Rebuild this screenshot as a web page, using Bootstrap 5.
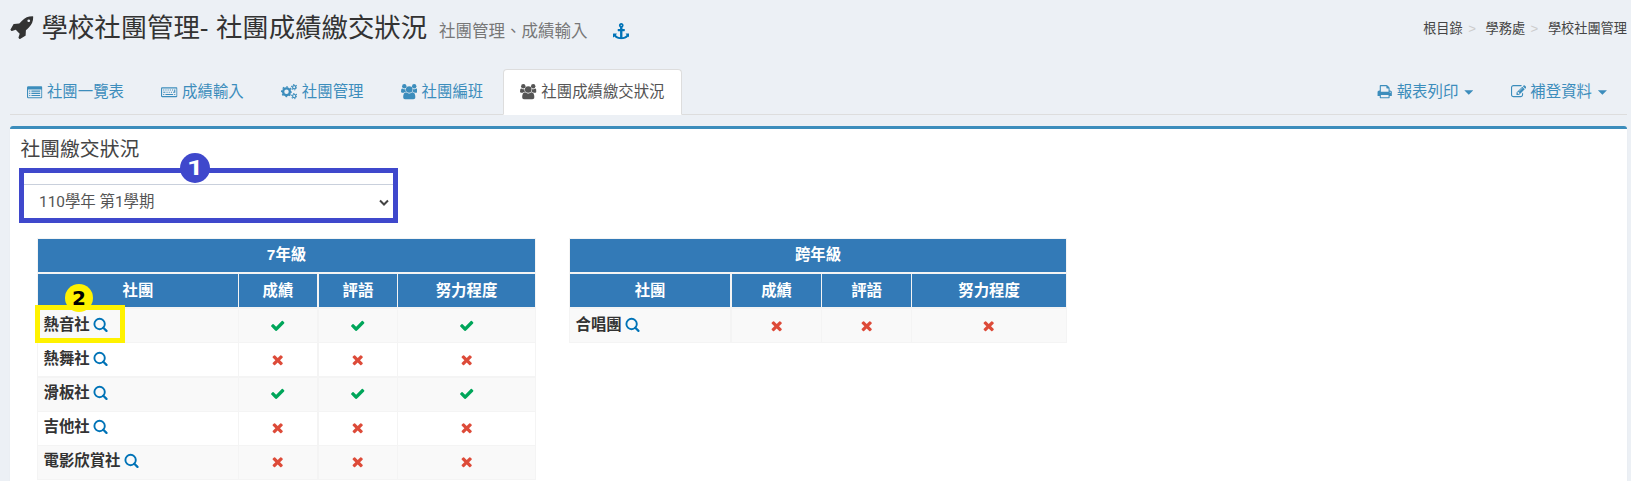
<!DOCTYPE html>
<html lang="zh-Hant">
<head>
<meta charset="utf-8">
<title>學校社團管理</title>
<link rel="stylesheet" href="https://cdn.jsdelivr.net/npm/bootstrap@5.3.0/dist/css/bootstrap.min.css">
<style>
body{background:#ecf0f5;color:#333;font:15.4px/22px "Liberation Sans","Noto Sans CJK TC",sans-serif;overflow:hidden;height:481px}
.ico{height:15.4px;width:15.4px;fill:currentColor;flex:none;display:block}
.ico.wide{width:16.5px}
.page-head{height:69px;padding:0 4px 0 10px}
.page-head h1{font-size:26.4px;line-height:30px;font-weight:400;color:#333;margin:13px 0 0}
.page-head .rocket{width:25px;height:26px;margin-top:1px}
.page-title{margin-left:6.5px}
.sub-title{font-size:16.5px;color:#777;margin-left:12px}
.anchor{color:#0073b7;margin:23px 0 0 25px}
.anchor .ico{width:16.5px;height:16.5px}
.crumbs{font-size:13.2px;color:#444;margin-top:19px;line-height:20px}
.crumbs .breadcrumb-item{padding:0;color:#444}
.crumbs .breadcrumb-item+.breadcrumb-item::before{content:">";color:#ccc;padding:0 9.6px 0 5.5px;float:none}
.nav-tabs{margin:0 4px 0 10px;height:46px;border-bottom:1px solid #ddd}
.nav-tabs .nav-link{color:#3c8dbc;padding:0 16.5px 0 16.2px;height:46px;border:1px solid transparent;border-radius:4px 4px 0 0;margin:0 2.6px 0 0;display:flex;align-items:center;gap:4.4px}
.nav-tabs .nav-link.active{background:#fff;color:#555;border-color:#ddd #ddd #fff}
.caret{width:9px;height:4.6px;background:currentColor;clip-path:polygon(0 0,100% 0,50% 100%);margin:1px 0 0 1.6px}
.panel-box{margin:11px 4px 0 10px;background:#fff;border-top:3px solid #3c8dbc;border-radius:3px 3px 0 0;height:360px;box-shadow:0 1px 1px rgba(0,0,0,.1)}
.panel-box h3{font-size:19.8px;line-height:24px;font-weight:400;color:#444;margin:0;padding:8px 0 0 10.5px}
.term{position:relative;margin:7px 0 0 9px;width:379px;height:55px;border:5px solid #3f48cc}
.term .form-select{margin-top:11px;height:34px;border:0;border-top:1px solid #c9d0dc;border-radius:0;background:#fff;color:#555;font-family:Roboto,"Noto Sans CJK TC",sans-serif;font-size:15.4px;line-height:34px;padding:0 0 0 15px;width:369px}
.term svg{position:absolute;right:4.5px;top:26px}
.bubble{position:absolute;border-radius:50%;display:flex;align-items:center;justify-content:center;font-weight:700}
.b1{width:30px;height:30px;left:156px;top:-20px;background:#3f48cc;color:#fff;font-size:21px;font-family:Roboto,sans-serif}
.b1 span{transform:scaleX(1.35)}
.b2{width:28px;height:28px;left:27px;top:-25px;background:#fff200;color:#000;font-size:20px;font-family:"DejaVu Sans",sans-serif}
.frame{position:absolute;left:-3px;top:-4px;width:90px;height:38px;border:5px solid #fff200}
.tables{padding:15px 0 0 27px;gap:33px}
.grade{table-layout:fixed;border-collapse:separate;border-spacing:0;border:solid #f4f4f4;border-width:1px 0 0 1px;flex:none}
.grade th,.grade td{padding:0;border:solid #f4f4f4;border-width:0 1px 1px 0;height:34px;vertical-align:middle;text-align:center}
.grade thead th{background:#337ab7;color:#fff;font-weight:700;height:35px;border-bottom-width:2px;line-height:20px;padding-bottom:2px}
.grade thead tr+tr th{padding-bottom:0}
.grade .w2{border-right-width:2px}
.grade .h2r>*{height:35px;border-bottom-width:2px}
.grade tbody tr:nth-child(odd)>*{background:#f9f9f9}
.grade tbody th{text-align:left;padding:0 0 1px 5.5px;font-weight:700;color:#333;position:relative}
.grade tbody tr:nth-child(n+3) th{padding-bottom:3px}
.grade tbody tr:nth-child(n+3) td{padding-bottom:2px}
.grade tbody th>div{gap:3.4px}
.grade tbody th .ico{color:#0073b7}
.grade td .ico{margin:0 auto}
.ok{color:#00a65a}.no{color:#dd4b39}
</style>
<script src="https://cdn.jsdelivr.net/npm/bootstrap@5.3.0/dist/js/bootstrap.bundle.min.js"></script>
</head>
<body>
<svg class="d-none">
<symbol id="search" viewBox="0 0 15.4 15.4"><g fill="none" stroke="currentColor"><circle cx="6.600" cy="7" r="5.200" stroke-width="1.900"/><path d="M10.300 10.700 13.500 13.900" stroke-width="2.200" stroke-linecap="round"/></g></symbol>
<symbol id="check" viewBox="0 0 1792 1792"><path d="M1671 566q0 40-28 68l-724 724-136 136q-28 28-68 28t-68-28l-136-136-362-362q-28-28-28-68t28-68l136-136q28-28 68-28t68 28l294 295 656-657q28-28 68-28t68 28l136 136q28 28 28 68z"/></symbol>
<symbol id="times" viewBox="0 0 1792 1792"><path d="M1490 1322q0 40-28 68l-136 136q-28 28-68 28t-68-28l-294-294-294 294q-28 28-68 28t-68-28l-136-136q-28-28-28-68t28-68l294-294-294-294q-28-28-28-68t28-68l136-136q28-28 68-28t68 28l294 294 294-294q28-28 68-28t68 28l136 136q28 28 28 68t-28 68l-294 294 294 294q28 28 28 68z"/></symbol>
<symbol id="users" viewBox="0 0 1920 1792"><circle cx="384" cy="256" r="256"/><circle cx="1536" cy="256" r="256"/><circle cx="960" cy="640" r="384"/><path d="M593 896q-162 5-265 128h-134q-82 0-138-40.500t-56-118.500q0-353 124-353 6 0 43.500 21t97.500 42.500 119 21.500q67 0 133-23-5 37-5 66 0 139 81 256zM1664 1533q0 120-73 189.500t-194 69.500h-874q-121 0-194-69.500t-73-189.500q0-53 3.500-103.500t14-109 26.500-108.500 43-97.500 62-81 85.500-53.500 111.500-20q10 0 43 21.500t73 48 107 48 135 21.500 135-21.500 107-48 73-48 43-21.500q61 0 111.500 20t85.500 53.500 62 81 43 97.500 26.500 108.500 14 109 3.500 103.500zM1920 865q0 78-56 118.500t-138 40.500h-134q-103-123-265-128 81-117 81-256 0-29-5-66 66 23 133 23 59 0 119-21.500t97.500-42.500 43.500-21q124 0 124 353z"/></symbol>
<symbol id="listalt" viewBox="0 0 1792 1792"><path fill-rule="evenodd" d="M160 256h1472q160 0 160 160v1088q0 160-160 160H160q-160 0-160-160V416q0-160 160-160zM128 640v864q0 32 32 32h1472q32 0 32-32V640zM256 768h128v128H256zM512 768h1024v128H512zM256 1024h128v128H256zM512 1024h1024v128H512zM256 1280h128v128H256zM512 1280h1024v128H512z"/></symbol>
<symbol id="keyboard" viewBox="0 0 1920 1792"><path fill-rule="evenodd" d="M128 384h1664q128 0 128 128v896q0 128-128 128H128Q0 1536 0 1408V512q0-128 128-128zM128 512v896h1664V512zM256 1152h128v128H256zM512 1152h896v128H512zM1536 1152h128v128h-128zM256 896h256v128H256zM640 896h128v128H640zM896 896h128v128H896zM1152 896h128v128h-128zM1408 896h128v-256h128v384h-256zM256 640h128v128H256zM512 640h128v128H512zM768 640h128v128H768zM1024 640h128v128h-128zM1280 640h128v128h-128z"/></symbol>
<symbol id="cogs" viewBox="0 0 1920 1792"><g fill="none" stroke="currentColor"><circle cx="640" cy="896" r="395" stroke-width="270"/><circle cx="640" cy="896" r="570" stroke-width="150" stroke-dasharray="210 237.700" stroke-dashoffset="105"/><circle cx="1536" cy="384" r="190" stroke-width="130"/><circle cx="1536" cy="384" r="310" stroke-width="120" stroke-dasharray="150 174.600"/><circle cx="1536" cy="1408" r="190" stroke-width="130"/><circle cx="1536" cy="1408" r="310" stroke-width="120" stroke-dasharray="150 174.600"/></g></symbol>
<symbol id="print" viewBox="0 0 1792 1792"><path d="M448 1536h896v-256h-896v256zm0-640h896v-384h-160q-40 0-68-28t-28-68v-160h-640v640zm1152 64q0-26-19-45t-45-19-45 19-19 45 19 45 45 19 45-19 19-45zm128 0v416q0 13-9.500 22.500t-22.500 9.500h-224v160q0 40-28 68t-68 28h-960q-40 0-68-28t-28-68v-160h-224q-13 0-22.500-9.500t-9.500-22.500v-416q0-79 56.500-135.500t135.500-56.500h64v-544q0-40 28-68t68-28h672q40 0 88 20t76 48l152 152q28 28 48 76t20 88v256h64q79 0 135.500 56.500t56.500 135.500z"/></symbol>
<symbol id="edit" viewBox="0 0 1792 1792"><path d="M888 1184l116-116-152-152-116 116v56h96v96h56zm440-720q-16-16-33 1l-350 350q-17 17-1 33t33-1l350-350q17-17 1-33zm80 594v190q0 119-84.500 203.500t-203.500 84.500h-832q-119 0-203.500-84.500t-84.500-203.500v-832q0-119 84.500-203.500t203.500-84.500h832q63 0 117 25 15 7 18 23 3 17-9 29l-49 49q-14 14-32 8-23-6-45-6h-832q-66 0-113 47t-47 113v832q0 66 47 113t113 47h832q66 0 113-47t47-113v-126q0-13 9-22l64-64q15-15 35-7t20 29zm-96-738l288 288-672 672h-288v-288zm444 132l-92 92-288-288 92-92q28-28 68-28t68 28l152 152q28 28 28 68t-28 68z"/></symbol>
<symbol id="rocket" viewBox="0 0 1792 1792"><path d="M1440 448q0-40-28-68t-68-28-68 28-28 68 28 68 68 28 68-28 28-68zm224-288q0 249-75.500 430.500t-253.500 360.500q-81 80-195 176l-20 379q-2 16-16 26l-384 224q-7 4-16 4-12 0-23-9l-64-64q-13-14-8-32l85-276-281-281-276 85q-3 1-9 1-14 0-23-9l-64-64q-17-19-5-39l224-384q10-14 26-16l379-20q96-114 176-195 188-187 358-258t431-71q14 0 24 9.500t10 22.500z"/></symbol>
<symbol id="anchor" viewBox="0 0 1792 1792"><path d="M960 256q0-26-19-45t-45-19-45 19-19 45 19 45 45 19 45-19 19-45zm832 928v352q0 22-20 30-8 2-12 2-13 0-23-9l-93-93q-119 143-318.500 226.500t-429.500 83.500-429.500-83.500-318.500-226.500l-93 93q-9 9-23 9-4 0-12-2-20-8-20-30v-352q0-14 9-23t23-9h352q22 0 30 20 8 19-7 35l-100 100q67 91 189.500 153.500t271.500 82.500v-647h-192q-26 0-45-19t-19-45v-128q0-26 19-45t45-19h192v-163q-58-34-93-92.500t-35-128.500q0-106 75-181t181-75 181 75 75 181q0 70-35 128.500t-93 92.500v163h192q26 0 45 19t19 45v128q0 26-19 45t-45 19h-192v647q149-20 271.500-82.500t189.500-153.500l-100-100q-15-16-7-35 8-20 30-20h352q14 0 23 9t9 23z"/></symbol>
</svg>

<header class="page-head d-flex align-items-start">
  <h1 class="d-flex"><svg class="ico rocket"><use href="#rocket"/></svg><span class="page-title">學校社團管理- 社團成績繳交狀況<small class="sub-title">社團管理、成績輸入</small></span></h1>
  <a class="anchor" href="#"><svg class="ico"><use href="#anchor"/></svg></a>
  <ol class="breadcrumb crumbs ms-auto mb-0">
    <li class="breadcrumb-item">根目錄</li><li class="breadcrumb-item">學務處</li><li class="breadcrumb-item">學校社團管理</li>
  </ol>
</header>

<ul class="nav nav-tabs flex-nowrap">
  <li class="nav-item"><a class="nav-link" href="#"><svg class="ico"><use href="#listalt"/></svg>社團一覽表</a></li>
  <li class="nav-item"><a class="nav-link" href="#"><svg class="ico wide"><use href="#keyboard"/></svg>成績輸入</a></li>
  <li class="nav-item"><a class="nav-link" href="#"><svg class="ico wide"><use href="#cogs"/></svg>社團管理</a></li>
  <li class="nav-item"><a class="nav-link" href="#"><svg class="ico wide"><use href="#users"/></svg>社團編班</a></li>
  <li class="nav-item"><a class="nav-link active" href="#"><svg class="ico wide"><use href="#users"/></svg>社團成績繳交狀況</a></li>
  <li class="nav-item ms-auto"><a class="nav-link" href="#"><svg class="ico"><use href="#print"/></svg>報表列印<span class="caret"></span></a></li>
  <li class="nav-item"><a class="nav-link" href="#"><svg class="ico"><use href="#edit"/></svg>補登資料<span class="caret"></span></a></li>
</ul>

<main class="panel-box">
  <h3>社團繳交狀況</h3>
  <div class="term">
    <div class="form-select">110學年 第1學期</div>
    <svg width="10" height="8" viewBox="0 0 10 8"><path d="M1 1.500 5 5.500 9 1.500" fill="none" stroke="#444" stroke-width="2"/></svg>
    <div class="bubble b1"><span>1</span></div>
  </div>
  <div class="tables d-flex align-items-start">
    <table class="grade" style="width:499px">
      <colgroup><col style="width:201px"><col style="width:80px"><col style="width:79px"><col style="width:138px"></colgroup>
      <thead>
        <tr><th colspan="4">7年級</th></tr>
        <tr><th>社團</th><th class="w2">成績</th><th>評語</th><th>努力程度</th></tr>
      </thead>
      <tbody>
        <tr><th><div class="d-flex align-items-center">熱音社<svg class="ico"><use href="#search"/></svg></div><div class="frame"></div><div class="bubble b2">2</div></th><td class="w2 ok"><svg class="ico"><use href="#check"/></svg></td><td class="ok"><svg class="ico"><use href="#check"/></svg></td><td class="ok"><svg class="ico"><use href="#check"/></svg></td></tr>
        <tr class="h2r"><th><div class="d-flex align-items-center">熱舞社<svg class="ico"><use href="#search"/></svg></div></th><td class="w2 no"><svg class="ico"><use href="#times"/></svg></td><td class="no"><svg class="ico"><use href="#times"/></svg></td><td class="no"><svg class="ico"><use href="#times"/></svg></td></tr>
        <tr><th><div class="d-flex align-items-center">滑板社<svg class="ico"><use href="#search"/></svg></div></th><td class="w2 ok"><svg class="ico"><use href="#check"/></svg></td><td class="ok"><svg class="ico"><use href="#check"/></svg></td><td class="ok"><svg class="ico"><use href="#check"/></svg></td></tr>
        <tr><th><div class="d-flex align-items-center">吉他社<svg class="ico"><use href="#search"/></svg></div></th><td class="w2 no"><svg class="ico"><use href="#times"/></svg></td><td class="no"><svg class="ico"><use href="#times"/></svg></td><td class="no"><svg class="ico"><use href="#times"/></svg></td></tr>
        <tr><th><div class="d-flex align-items-center">電影欣賞社<svg class="ico"><use href="#search"/></svg></div></th><td class="w2 no"><svg class="ico"><use href="#times"/></svg></td><td class="no"><svg class="ico"><use href="#times"/></svg></td><td class="no"><svg class="ico"><use href="#times"/></svg></td></tr>
      </tbody>
    </table>
    <table class="grade" style="width:498px">
      <colgroup><col style="width:162px"><col style="width:90px"><col style="width:90px"><col style="width:155px"></colgroup>
      <thead>
        <tr><th colspan="4">跨年級</th></tr>
        <tr><th class="w2">社團</th><th>成績</th><th>評語</th><th>努力程度</th></tr>
      </thead>
      <tbody>
        <tr><th class="w2"><div class="d-flex align-items-center">合唱團<svg class="ico"><use href="#search"/></svg></div></th><td class="no"><svg class="ico"><use href="#times"/></svg></td><td class="no"><svg class="ico"><use href="#times"/></svg></td><td class="no"><svg class="ico"><use href="#times"/></svg></td></tr>
      </tbody>
    </table>
  </div>
</main>
</body>
</html>
